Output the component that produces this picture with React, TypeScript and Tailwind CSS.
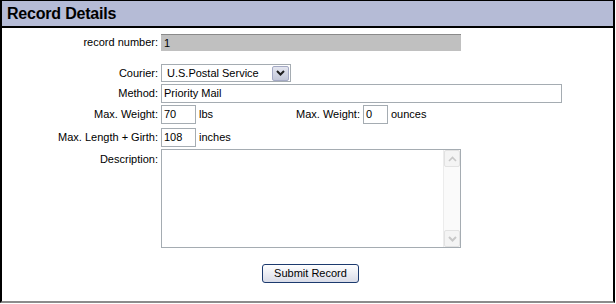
import type { ReactNode } from "react";

function Label({ children, top }: { children: ReactNode; top?: boolean }) {
	return (
		<div
			className={
				"w-[156px] shrink-0 text-right" + (top ? " self-start pt-[2px]" : "")
			}
		>
			{children}
		</div>
	);
}

function TextBox({ value, width }: { value: string; width: string }) {
	return (
		<div
			className={`${width} flex h-full items-center border border-[#a5acb2] bg-white px-[2px] leading-none`}
		>
			{value}
		</div>
	);
}

function ChevronDown({ color = "#1f1f1f" }: { color?: string }) {
	return (
		<svg width="9" height="6" viewBox="0 0 9 6" aria-hidden="true">
			<path d="M1 1 L4.5 4.5 L8 1" fill="none" stroke={color} strokeWidth="2" />
		</svg>
	);
}

function ChevronUp({ color = "#c8c8c8" }: { color?: string }) {
	return (
		<svg width="9" height="6" viewBox="0 0 9 6" aria-hidden="true">
			<path d="M1 5 L4.5 1.5 L8 5" fill="none" stroke={color} strokeWidth="1.6" />
		</svg>
	);
}

export default function App() {
	return (
		<div className="h-[304px] w-[616px] bg-white font-['Liberation_Sans',Arial,sans-serif] text-[11px] text-black">
			<div className="flex h-[303px] w-[615px] flex-col border-t border-r-2 border-l-2 border-black border-b-2 border-b-[#8c8c8c]">
				<div className="flex h-[27px] shrink-0 items-center border-b-2 border-black bg-[#b5bbd6] pl-[5px]">
					<h1 className="text-[16px] font-bold leading-none tracking-[-0.2px]">
						Record Details
					</h1>
				</div>

				<div className="flex flex-col pt-[6px]">
					<div className="flex h-[17px] items-center gap-[3px]">
						<Label>record number:</Label>
						<div className="flex h-full w-[300px] items-center border-t border-[#8a8a8a] bg-[#c0c0c0] px-[3px] leading-none">
							1
						</div>
					</div>

					<div className="mt-[13px] flex h-[18px] items-center gap-[3px]">
						<Label>Courier:</Label>
						<div className="flex h-full w-[130px] items-center justify-between border border-[#a5acb2] bg-white pl-[5px] pr-px leading-none">
							<span>U.S.Postal Service</span>
							<div className="flex h-[15px] w-[17px] items-center justify-center rounded-[2px] border border-[#a4a9c4] bg-linear-to-b from-[#e4e6f0] to-[#c3c7d8]">
								<ChevronDown />
							</div>
						</div>
					</div>

					<div className="mt-[2px] flex h-[19px] items-center gap-[3px]">
						<Label>Method:</Label>
						<TextBox value="Priority Mail" width="w-[401px]" />
					</div>

					<div className="mt-[2px] flex h-[19px] items-center">
						<Label>Max. Weight:</Label>
						<div className="ml-[3px] h-full">
							<TextBox value="70" width="w-[35px]" />
						</div>
						<span className="ml-[3px] w-[90px]">lbs</span>
						<span className="ml-[3px] w-[68px] text-right">Max. Weight:</span>
						<div className="ml-[3px] h-full">
							<TextBox value="0" width="w-[25px]" />
						</div>
						<span className="ml-[3px]">ounces</span>
					</div>

					<div className="mt-[4px] flex h-[19px] items-center gap-[3px]">
						<Label>Max. Length + Girth:</Label>
						<TextBox value="108" width="w-[35px]" />
						<span>inches</span>
					</div>

					<div className="mt-[2px] flex h-[99px] gap-[3px]">
						<Label top>Description:</Label>
						<div className="flex h-full w-[300px] border border-[#a5acb2] bg-white">
							<textarea
								className="h-full flex-1 resize-none border-0 p-[2px] outline-none"
								aria-label="Description"
							/>
							<div className="flex h-full w-[17px] flex-col justify-between border-l border-[#ececec] bg-[#fafafa]">
								<div className="flex h-[17px] items-center justify-center rounded-[2px] border border-[#e2e2e2] bg-[#f4f4f4]">
									<ChevronUp />
								</div>
								<div className="flex h-[17px] items-center justify-center rounded-[2px] border border-[#e2e2e2] bg-[#f4f4f4]">
									<ChevronDown color="#c8c8c8" />
								</div>
							</div>
						</div>
					</div>

					<div className="mt-[16px] flex pl-[260px]">
						<button
							type="button"
							className="h-[19px] w-[97px] rounded-[3px] border border-[#1c3a6e] bg-linear-to-b from-white to-[#d9dce8] text-[11px] leading-none"
						>
							Submit Record
						</button>
					</div>
				</div>
			</div>
		</div>
	);
}
